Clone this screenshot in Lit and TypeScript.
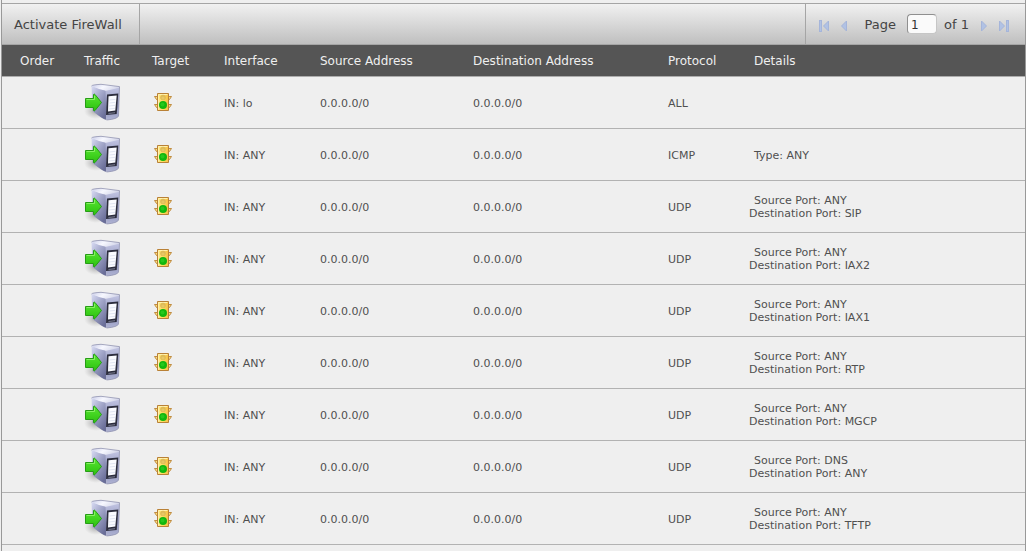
import { LitElement, html, css, svg } from "lit";
import { customElement, property } from "lit/decorators.js";

interface Rule {
  iface: string;
  source: string;
  destination: string;
  protocol: string;
  details: string[];
}

const ANYWHERE = "0.0.0.0/0";

const rule = (iface: string, protocol: string, ...details: string[]): Rule => ({
  iface: `IN: ${iface}`,
  source: ANYWHERE,
  destination: ANYWHERE,
  protocol,
  details,
});

const udp = (source: string, destination: string) =>
  rule("ANY", "UDP", `Source Port: ${source}`, `Destination Port: ${destination}`);

const RULES: Rule[] = [
  rule("lo", "ALL"),
  rule("ANY", "ICMP", "Type: ANY"),
  udp("ANY", "SIP"),
  udp("ANY", "IAX2"),
  udp("ANY", "IAX1"),
  udp("ANY", "RTP"),
  udp("ANY", "MGCP"),
  udp("DNS", "ANY"),
  udp("ANY", "TFTP"),
];

const HEADINGS = [
  "Order",
  "Traffic",
  "Target",
  "Interface",
  "Source Address",
  "Destination Address",
  "Protocol",
  "Details",
];

@customElement("incoming-icon")
export class IncomingIcon extends LitElement {
  static styles = css`
    :host { display: block; width: 38px; height: 38px; }
    svg { display: block; }
  `;

  render() {
    return html`<svg width="38" height="38" viewBox="0 0 38 38" role="img" aria-label="Incoming">
      <defs>
        <linearGradient id="side" x1="0" y1="0" x2=".7" y2="1">
          <stop offset="0" stop-color="#d9dcf4" />
          <stop offset=".4" stop-color="#a9adcf" />
          <stop offset="1" stop-color="#6a6e98" />
        </linearGradient>
        <linearGradient id="front" x1="0" y1="0" x2="0" y2="1">
          <stop offset="0" stop-color="#c3c6e4" />
          <stop offset=".6" stop-color="#8d91b9" />
          <stop offset="1" stop-color="#b0b4d4" />
        </linearGradient>
        <linearGradient id="lid" x1="0" y1="0" x2="1" y2=".3">
          <stop offset="0" stop-color="#c9cce8" />
          <stop offset=".5" stop-color="#f7f8ff" />
          <stop offset="1" stop-color="#d5d7ea" />
        </linearGradient>
        <linearGradient id="arrow" x1="0" y1="0" x2="0" y2="1">
          <stop offset="0" stop-color="#58e632" />
          <stop offset="1" stop-color="#2cc20f" />
        </linearGradient>
        <radialGradient id="shade">
          <stop offset="0" stop-color="#555" stop-opacity=".5" />
          <stop offset="1" stop-color="#888" stop-opacity="0" />
        </radialGradient>
      </defs>
      <ellipse cx="12" cy="28" rx="12" ry="8" fill="url(#shade)" />
      <path d="M7.5 3 22 7.500 22.500 37 Q19 36.500 8.500 28Z" fill="url(#side)" />
      <path d="M21.500 7 35.500 4 34.500 33 Q33.500 36 22.500 37Z" fill="url(#front)" />
      <path d="M7.500 3 Q8 1.800 17 1.300 L35.500 3.600 Q35.500 5.500 22 7.700 Q15 6.500 7.500 3Z" fill="url(#lid)" />
      <path d="M7.500 3 Q8 1.800 17 1.300L35.500 3.600 34.500 33Q33.500 36 22.500 37" fill="none" stroke="#9093b0" stroke-width=".8" />
      <path d="M23 11.500 34.300 10.500 32.700 31 22 32Z" fill="#2c2d3d" />
      <path d="M24.500 13.200 32.700 12.500 31.300 27.500 24 28.500Z" fill="#fafbff" />
      <path d="M25.500 17 31.500 16.300M25.500 20 31.500 19.300M25 23 31 22.300M25 26 31 25.300" stroke="#d9deed" stroke-width=".8" />
      <path d="M24.500 30.500 31 29.700" stroke="#777a90" stroke-width="1" />
      <path d="M1.500 15.500H9.500V11.500Q10 10.500 11 11.500L17.500 19.500 11 27.500Q10 28.500 9.500 27.500V24.500H1.500Z" fill="url(#arrow)" stroke="#279c16" stroke-width="1" stroke-linejoin="round" />
      <path d="M2.500 16.500H10.500V13" fill="none" stroke="#86f163" stroke-width="1" />
    </svg>`;
  }
}

@customElement("accept-icon")
export class AcceptIcon extends LitElement {
  static styles = css`
    :host { display: block; width: 21px; height: 20px; }
    svg { display: block; }
  `;

  render() {
    return html`<svg width="21" height="20" viewBox="0 0 21 20" role="img" aria-label="Accept">
      <defs>
        <linearGradient id="body" x1="0" y1="0" x2="1" y2="0">
          <stop offset="0" stop-color="#ffe882" />
          <stop offset=".5" stop-color="#ffdc60" />
          <stop offset="1" stop-color="#f6bd45" />
        </linearGradient>
      </defs>
      <path d="M2.500 4.500H6V7.500H4.500ZM2.500 12.500H6V15.500H4.500ZM19.500 4.500H16V7.500H17.500ZM19.500 12.500H16V15.500H17.500Z" fill="#ffe27a" stroke="#b98137" stroke-width=".9" />
      <path d="M5.500 1.500H16.500V18.500H5.500Z" fill="url(#body)" stroke="#b98137" />
      <path d="M6.500 17.500V2.500H15.500" fill="none" stroke="#fff1ad" />
      <circle cx="11" cy="5.500" r="2.800" fill="#deba58" />
      <circle cx="11" cy="6" r="1.600" fill="#e8c864" />
      <circle cx="11" cy="13" r="4" fill="#12b60d" />
      <circle cx="10.500" cy="12.500" r="2" fill="#25c81c" />
    </svg>`;
  }
}

const pagerGlyph = {
  first: svg`<rect x="1.500" y="1.500" width="2" height="11" /><path d="M10.500 2V12L5.500 7Z" />`,
  previous: svg`<path d="M6.500 2V12L1.500 7Z" />`,
  next: svg`<path d="M1.500 2V12L6.500 7Z" />`,
  last: svg`<path d="M1.500 2V12L6.500 7Z" /><rect x="8.500" y="1.500" width="2" height="11" />`,
};

@customElement("page-switcher")
export class PageSwitcher extends LitElement {
  @property({ type: Number }) page = 1;
  @property({ type: Number }) total = 1;

  static styles = css`
    :host {
      display: flex;
      align-items: center;
      box-sizing: border-box;
      padding: 0 15px 0 12px;
      border-left: 1px solid #a5a5a5;
    }
    .step {
      display: block;
      flex: none;
      padding: 0;
      border: 0;
      background: none;
      margin-top: 3px;
    }
    .step svg {
      display: block;
      fill: #b1c2e4;
      stroke: #a5b5da;
      stroke-width: 1;
    }
    .previous, .last { margin-left: 10px; }
    .next { margin-left: 11px; }
    .label { margin-left: 17px; }
    .label, .total { padding-top: 2px; }
    .number {
      box-sizing: border-box;
      width: 30px;
      height: 20px;
      margin: 0 7px 0 11px;
      padding: 2px 3px 0;
      border: 1px solid #c6c6c6;
      border-top-color: #8f8f8f;
      border-left-color: #8f8f8f;
      border-radius: 4px;
      background: #fafafa;
      color: #333;
      font: 12px "DejaVu Sans", Verdana, sans-serif;
    }
  `;

  render() {
    return html`
      <button class="step first" aria-label="First page"><svg width="12" height="14">${pagerGlyph.first}</svg></button>
      <button class="step previous" aria-label="Previous page"><svg width="8" height="14">${pagerGlyph.previous}</svg></button>
      <label class="label" for="page">Page</label>
      <input class="number" id="page" type="text" .value=${String(this.page)} />
      <span class="total">of ${this.total}</span>
      <button class="step next" aria-label="Next page"><svg width="8" height="14">${pagerGlyph.next}</svg></button>
      <button class="step last" aria-label="Last page"><svg width="12" height="14">${pagerGlyph.last}</svg></button>
    `;
  }
}

@customElement("app-root")
export class AppRoot extends LitElement {
  static styles = css`
    :host {
      display: flex;
      box-sizing: border-box;
      min-height: 100vh;
      padding-left: 1px;
      background: #efefef;
      color: #444;
      font: 11px/13px "DejaVu Sans", Verdana, sans-serif;
    }
    .panel {
      flex: 1;
      min-width: 0;
      padding-top: 3px;
      border: solid #999;
      border-width: 0 1px;
    }
    .toolbar {
      display: flex;
      justify-content: space-between;
      height: 40px;
      border: solid #a5a5a5;
      border-width: 1px 0;
      background: linear-gradient(#f1f1f1, #bfbfbf);
      font-size: 13px;
      line-height: 16px;
    }
    .activate {
      min-width: 138px;
      padding: 2px 12px 0;
      border: 0;
      border-right: 1px solid #a5a5a5;
      background: none;
      color: inherit;
      font: inherit;
      text-align: left;
    }
    .rules {
      width: 100%;
      border-collapse: separate;
      border-spacing: 0;
      table-layout: fixed;
    }
    .order { width: 64px; }
    .traffic { width: 68px; }
    .target { width: 72px; }
    .interface { width: 96px; }
    .source { width: 153px; }
    .destination { width: 195px; }
    .protocol { width: 86px; }
    .heading {
      box-sizing: border-box;
      height: 32px;
      padding: 2px 0 0 18px;
      border-bottom: 1px solid #adadad;
      background: #555;
      color: #efefef;
      font-size: 12px;
      font-weight: normal;
      text-align: left;
      white-space: nowrap;
    }
    .cell {
      box-sizing: border-box;
      height: 52px;
      padding: 0 0 0 18px;
      border-bottom: 1px solid #b2b2b2;
      color: #505050;
      vertical-align: middle;
    }
    .line { padding-top: 2px; }
    .icon { padding-bottom: 2px; }
    .details {
      padding-left: 13px;
      text-indent: 5px;
    }
    .detail + .detail { text-indent: 0; }
  `;

  render() {
    return html`
      <main class="panel">
        <div class="toolbar">
          <button class="activate">Activate FireWall</button>
          <page-switcher .page=${1} .total=${1}></page-switcher>
        </div>
        <table class="rules">
          <colgroup>
            <col class="order" /><col class="traffic" /><col class="target" /><col class="interface" />
            <col class="source" /><col class="destination" /><col class="protocol" /><col />
          </colgroup>
          <thead>
            <tr>${HEADINGS.map((h) => html`<th class="heading" scope="col">${h}</th>`)}</tr>
          </thead>
          <tbody>
            ${RULES.map(
              (r) => html`<tr>
                <td class="cell"></td>
                <td class="cell icon"><incoming-icon></incoming-icon></td>
                <td class="cell icon"><accept-icon></accept-icon></td>
                <td class="cell line">${r.iface}</td>
                <td class="cell line">${r.source}</td>
                <td class="cell line">${r.destination}</td>
                <td class="cell line">${r.protocol}</td>
                <td class="cell details ${r.details.length > 1 ? "" : "line"}">
                  ${r.details.map((d) => html`<div class="detail">${d}</div>`)}
                </td>
              </tr>`
            )}
          </tbody>
        </table>
      </main>
    `;
  }
}
